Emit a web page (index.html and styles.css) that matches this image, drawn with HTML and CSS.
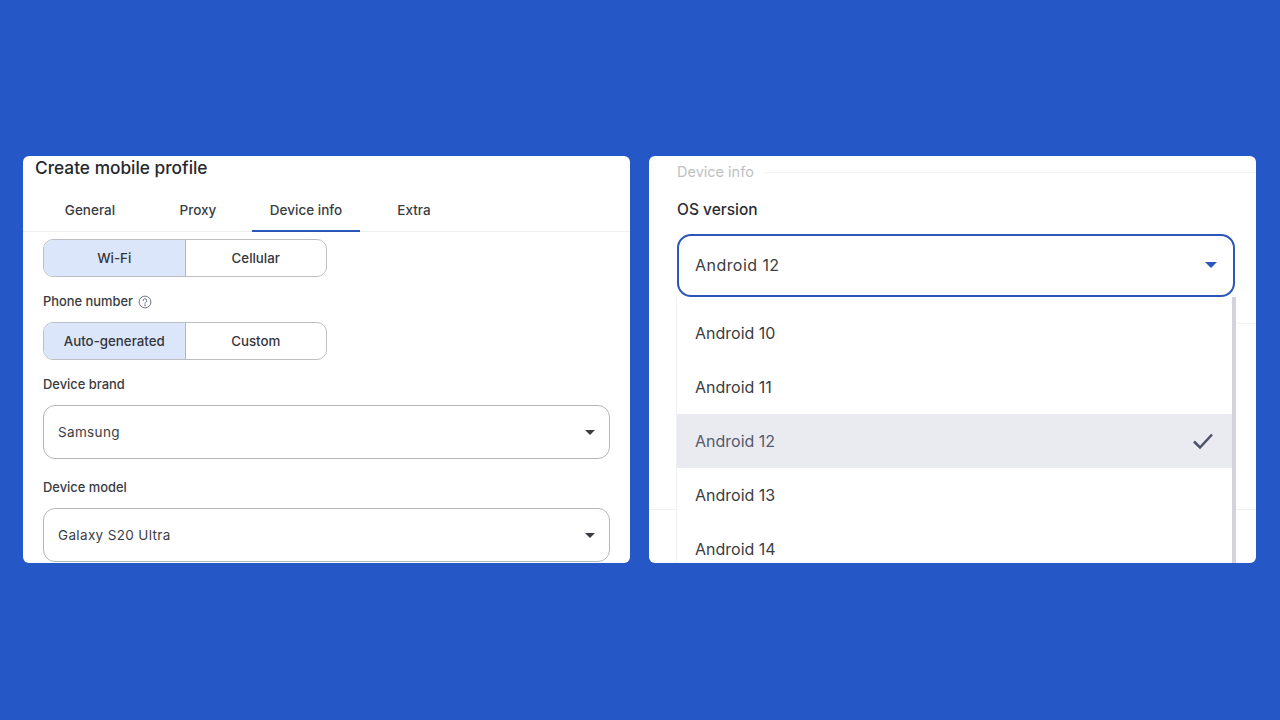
FILE: index.html
```html
<!DOCTYPE html>
<html lang="en">
<head>
<meta charset="utf-8">
<title>Create mobile profile</title>
<link rel="stylesheet" href="styles.css">
</head>
<body>
<main class="stage">
  <section class="panel panel-left">
    <h1 class="title">Create mobile profile</h1>
    <nav class="tabs">
      <span class="tab">General</span>
      <span class="tab">Proxy</span>
      <span class="tab tab-active">Device info</span>
      <span class="tab">Extra</span>
    </nav>
    <div class="form">
      <div class="segment">
        <span class="seg seg-on">Wi-Fi</span>
        <span class="seg">Cellular</span>
      </div>
      <div class="label label-phone">Phone number
        <svg class="help" width="14" height="14" viewBox="0 0 14 14" fill="none" stroke="#6f7480" stroke-width="1"><circle cx="7" cy="7" r="5.9"/><path d="M5.2 5.6a1.8 1.8 0 1 1 2.7 1.5c-.6.4-.9.7-.9 1.3" stroke-linecap="round"/><circle cx="7" cy="10.2" r=".4" fill="#6f7480"/></svg>
      </div>
      <div class="segment">
        <span class="seg seg-on">Auto-generated</span>
        <span class="seg">Custom</span>
      </div>
      <div class="label label-brand">Device brand</div>
      <div class="select"><span>Samsung</span><i class="caret"></i></div>
      <div class="label label-model">Device model</div>
      <div class="select"><span>Galaxy S20 Ultra</span><i class="caret"></i></div>
    </div>
  </section>
  <section class="panel panel-right">
    <div class="legend"><span>Device info</span><i class="legend-line"></i></div>
    <div class="os-label">OS version</div>
    <div class="os-select"><span>Android 12</span><i class="caret caret-blue"></i></div>
    <hr class="rule rule-a">
    <hr class="rule rule-b">
    <ul class="menu">
      <li class="item">Android 10</li>
      <li class="item">Android 11</li>
      <li class="item item-on">Android 12
        <svg width="22" height="18" viewBox="0 0 22 18" fill="none" stroke="#4b5266" stroke-width="2.5"><path d="M2 9.5l6 6L20 2.5"/></svg>
      </li>
      <li class="item">Android 13</li>
      <li class="item">Android 14</li>
    </ul>
  </section>
</main>
</body>
</html>
```
FILE: styles.css
```css
* { box-sizing: border-box; }
html, body { margin: 0; height: 100%; }
body { background: #2557c7; font-family: Inter, "Liberation Sans", sans-serif; color: #2b2d33; }
.stage { display: flex; gap: 19px; padding: 156px 24px 0 23px; }
.panel { position: relative; flex: 0 0 607px; height: 407px; background: #fff; border-radius: 6px; overflow: hidden; }

.title { margin: 0; padding: 1px 0 0 12px; font-size: 17.3px; line-height: 22px; font-weight: 500; color: #26282d; }
.tabs { display: flex; margin-top: 9px; padding-left: 13px; height: 44px; border-bottom: 1px solid #eceef0; }
.tab { width: 108px; height: 44px; display: flex; align-items: center; justify-content: center; font-size: 13.5px; font-weight: 500; color: #3a3c42; padding-bottom: 1px; }
.tab-active { border-bottom: 2px solid #2a57b8; padding-bottom: 0; padding-top: 1px; }

.form { padding: 7px 20px 0 20px; }
.segment { display: flex; width: 284px; height: 38px; border: 1px solid #bcbec4; border-radius: 10px; overflow: hidden; }
.seg { display: flex; align-items: center; justify-content: center; width: 141px; font-size: 13.3px; font-weight: 500; color: #34363c; }
.seg-on { background: #dbe6fa; border-right: 1px solid #b0b6c2; width: 142px; }
.label { display: flex; align-items: center; gap: 5px; padding-top: 1px; font-size: 12.9px; line-height: 18px; font-weight: 500; color: #3a3c42; }
.label-phone { margin: 15px 0 11px; }
.label-brand { margin: 15px 0 11px; }
.label-model { margin: 19px 0 11px; }
.help { flex: none; }
.select { display: flex; align-items: center; justify-content: space-between; height: 54px; padding: 0 14px 0 14px; border: 1px solid #b4b6ba; border-radius: 12px; font-size: 13.5px; letter-spacing: .35px; color: #3c3e44; }
.caret { width: 0; height: 0; border-left: 5px solid transparent; border-right: 5px solid transparent; border-top: 5px solid #3a3c42; }

.legend { display: flex; align-items: center; gap: 10px; padding: 7px 0 0 28px; font-size: 14.5px; line-height: 18px; color: #bdbfc4; }
.legend-line { flex: 1; height: 1px; background: #f0f1f3; }
.os-label { margin: 19px 0 0 28px; font-size: 15.5px; line-height: 20px; font-weight: 500; color: #2b2d33; }
.os-select { display: flex; align-items: center; justify-content: space-between; width: 558px; height: 63px; margin: 14px 0 0 28px; padding: 0 16px 1px; border: 2px solid #2a57b8; border-radius: 14px; font-size: 16px; letter-spacing: .45px; color: #3a3c42; }
.caret-blue { border-left-width: 6px; border-right-width: 6px; border-top: 6px solid #2a57b8; }
.rule { position: absolute; right: 0; margin: 0; border: 0; height: 1px; background: #f0f1f3; }
.rule-a { top: 167px; left: 586px; }
.rule-b { top: 353px; left: 0; }

.menu { position: absolute; left: 27px; top: 141px; width: 560px; height: 270px; margin: 0; padding: 9px 0 0; list-style: none; background: #fff; border-left: 1px solid #eff0f2; border-right: 4px solid #d2d3dc; }
.item { display: flex; align-items: center; justify-content: space-between; height: 54px; padding: 0 18px; font-size: 16px; color: #3a3c42; }
.item-on { background: #e9ebf1; color: #555a6c; }
```
